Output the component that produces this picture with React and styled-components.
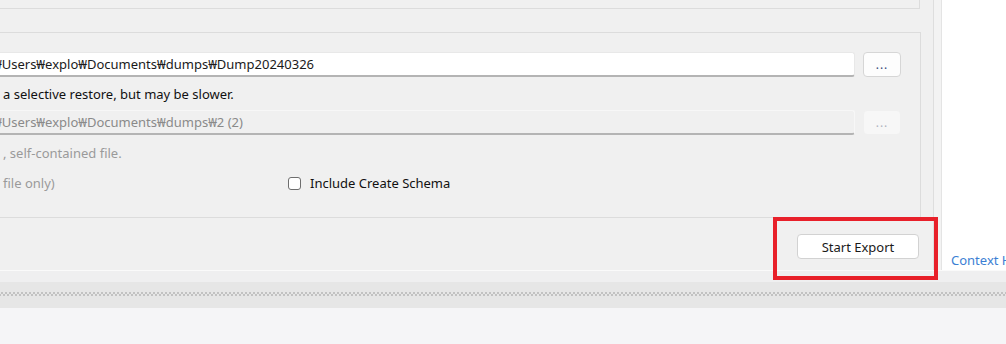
import React from "react";
import styled, { createGlobalStyle } from "styled-components";

const GlobalStyle = createGlobalStyle`
  html, body {
    margin: 0;
    padding: 0;
    background: #f5f5f7;
  }
  body {
    font-family: "Noto Sans", "Open Sans", sans-serif;
    font-size: 13px;
  }
`;

const Page = styled.div`
  width: 1006px;
  height: 344px;
  overflow: hidden;
  display: flex;
  flex-direction: column;
`;

const Main = styled.div`
  display: flex;
  height: 270px;
  flex-shrink: 0;
`;

const Panel = styled.div`
  width: 933px;
  background: #f0f0f0;
  border-right: 1px solid #dedede;
  display: flex;
  flex-direction: column;
`;

const TopGroup = styled.div`
  width: 920px;
  height: 9px;
  border-bottom: 1px solid #dcdcdc;
  border-right: 1px solid #dcdcdc;
  box-sizing: border-box;
`;

const Group = styled.div`
  margin-top: 23px;
  width: 921px;
  height: 186px;
  box-sizing: border-box;
  border: 1px solid #dcdcdc;
  border-left: none;
  padding: 19px 19px 0 0;
  display: flex;
  flex-direction: column;
`;

const FieldRow = styled.div`
  display: flex;
  align-items: center;
  gap: 8px;
  height: 25px;
`;

const Input = styled.div`
  flex: 1;
  height: 25px;
  box-sizing: border-box;
  background: ${(p) => (p.disabled ? "#f0f0f0" : "#ffffff")};
  border: 1px solid ${(p) => (p.disabled ? "#f7f7f7" : "#e8e8e8")};
  border-left: none;
  border-bottom: 2px solid #b4b4b4;
  border-radius: 0 3px 3px 0;
  color: ${(p) => (p.disabled ? "#8a8a8a" : "#1a1a1a")};
  display: flex;
  align-items: center;
  overflow: hidden;
  white-space: nowrap;
`;

const InputText = styled.span`
  margin-left: -7px;
`;

const BrowseButton = styled.div`
  width: 38px;
  height: 25px;
  box-sizing: border-box;
  border: 1px solid ${(p) => (p.disabled ? "#f0f0f0" : "#d6d6d6")};
  border-radius: 4px;
  background: ${(p) => (p.disabled ? "#f7f7f7" : "#fdfdfd")};
  color: ${(p) => (p.disabled ? "#b0b4c0" : "#3a4a7a")};
  display: flex;
  justify-content: center;
  align-items: flex-end;
  padding-bottom: 5px;
  font-size: 12px;
  letter-spacing: 1px;
  line-height: 1;
`;

const Hint = styled.div`
  height: 33px;
  display: flex;
  align-items: center;
  padding: ${(p) => (p.disabled ? "3px 0 0 3px" : "0 0 0 3px")};
  box-sizing: border-box;
  color: ${(p) => (p.disabled ? "#9a9a9a" : "#111111")};
  white-space: nowrap;
`;

const OptionRow = styled.div`
  display: flex;
  align-items: center;
  height: 30px;
  padding-left: 3px;
  white-space: nowrap;
`;

const Muted = styled.span`
  color: #9a9a9a;
  width: 285px;
`;

const Check = styled.span`
  width: 13px;
  height: 13px;
  box-sizing: border-box;
  border: 1px solid #6e6e6e;
  border-radius: 3px;
  background: #ffffff;
  margin-right: 9px;
`;

const CheckLabel = styled.span`
  color: #111111;
`;

const Footer = styled.div`
  flex: 1;
  display: flex;
  justify-content: flex-end;
  align-items: flex-start;
  padding: 16px 14px 0 0;
`;

const ActionButton = styled.button`
  width: 122px;
  height: 25px;
  border: 1px solid #d2d2d2;
  border-radius: 4px;
  background: #ffffff;
  font-family: inherit;
  font-size: 13px;
  color: #1a1a1a;
  padding: 0;
  position: relative;
`;

const Highlight = styled.span`
  position: absolute;
  left: -25px;
  top: -18px;
  width: 165px;
  height: 63px;
  box-sizing: border-box;
  border: 4px solid #e8202a;
  pointer-events: none;
`;

const Strip = styled.div`
  width: 7px;
  background: #f3f3f3;
  border-right: 1px solid #e4e4e4;
`;

const Side = styled.div`
  flex: 1;
  background: #ffffff;
  display: flex;
  align-items: flex-end;
  padding: 0 0 1px 9px;
  overflow: hidden;
  white-space: nowrap;
`;

const Link = styled.span`
  color: #3b7fd4;
`;

const Splitter = styled.div`
  height: 38px;
  flex-shrink: 0;
  border-top: 1px solid #fafafa;
  box-sizing: border-box;
  background: #efeff0;
  display: flex;
  flex-direction: column;
  justify-content: flex-end;
`;

const Grip = styled.div`
  height: 26px;
  background-color: #e6e6e6;
  background-image: radial-gradient(circle, #c2c2c2 0.9px, transparent 1.1px),
    radial-gradient(circle, #c2c2c2 0.9px, transparent 1.1px);
  background-size: 4px 4px, 4px 4px;
  background-position: 0 9px, 2px 11px;
  background-repeat: repeat-x;
`;

const Bottom = styled.div`
  flex: 1;
  background: #f5f5f7;
`;

export default function App() {
  return (
    <Page>
      <GlobalStyle />
      <Main>
        <Panel>
          <TopGroup />
          <Group>
            <FieldRow>
              <Input>
                <InputText>₩Users₩explo₩Documents₩dumps₩Dump20240326</InputText>
              </Input>
              <BrowseButton>...</BrowseButton>
            </FieldRow>
            <Hint>a selective restore, but may be slower.</Hint>
            <FieldRow>
              <Input disabled>
                <InputText>₩Users₩explo₩Documents₩dumps₩2 (2)</InputText>
              </Input>
              <BrowseButton disabled>...</BrowseButton>
            </FieldRow>
            <Hint disabled>, self-contained file.</Hint>
            <OptionRow>
              <Muted>file only)</Muted>
              <Check />
              <CheckLabel>Include Create Schema</CheckLabel>
            </OptionRow>
          </Group>
          <Footer>
            <ActionButton>
              Start Export
              <Highlight />
            </ActionButton>
          </Footer>
        </Panel>
        <Strip />
        <Side>
          <Link>Context Help</Link>
        </Side>
      </Main>
      <Splitter>
        <Grip />
      </Splitter>
      <Bottom />
    </Page>
  );
}
